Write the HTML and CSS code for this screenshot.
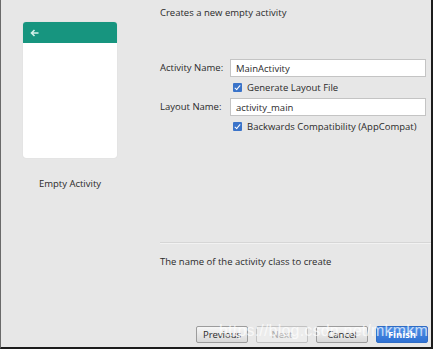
FILE: index.html
```html
<!DOCTYPE html>
<html lang="en">
  <head>
    <meta charset="UTF-8" />
    <title>Empty Activity</title>
    <link rel="stylesheet" href="styles.css">
  </head>
  <body>
    <div class="window">
      <!-- Template preview -->
      <div class="preview">
        <div class="phone">
          <div class="phone-bar">
            <svg width="9" height="8" viewBox="0 0 9 8">
              <path d="M8.5 4H1.5M4.5 1L1.5 4L4.5 7" fill="none" stroke="#d3f1ea" stroke-width="1.6" />
            </svg>
          </div>
        </div>
        <div class="preview-name">Empty Activity</div>
      </div>

      <!-- Options -->
      <div class="details">
        <div class="desc">Creates a new empty activity</div>
        <div class="form">
          <label for="activity-name">Activity Name:</label>
          <input type="text" id="activity-name" value="MainActivity" />
          <span></span>
          <div class="check"><span class="box"></span>Generate Layout File</div>
          <label for="layout-name">Layout Name:</label>
          <input type="text" id="layout-name" value="activity_main" />
          <span></span>
          <div class="check"><span class="box"></span>Backwards Compatibility (AppCompat)</div>
        </div>
        <div class="separator"></div>
        <div class="hint">The name of the activity class to create</div>
        <div class="buttons">
          <button class="btn">Previous</button>
          <button class="btn" disabled>Next</button>
          <button class="btn">Cancel</button>
          <button class="btn primary">Finish</button>
        </div>
      </div>

      <span class="watermark">https://blog.csdn.net/mkmkm</span>
    </div>
  </body>
</html>
```

FILE: styles.css
```css
body {
  margin: 0;
  font-family: "Open Sans", "Noto Sans", sans-serif;
  font-size: 9.5px;
  color: #2a2a2a;
}
.window {
  position: relative;
  display: flex;
  width: 433px;
  height: 349px;
  box-sizing: border-box;
  background-color: #e7e7e7;
  border-left: 1px solid #6a6a6a;
  border-right: 2px solid #1c1c1c;
  border-bottom: 2px solid #1c1c1c;
  overflow: hidden;
}
.preview {
  width: 159px;
  flex-shrink: 0;
  padding: 22px 0 0 22px;
  box-sizing: border-box;
}
.phone {
  width: 94px;
  height: 136px;
  background-color: #fff;
  border-radius: 3px;
  box-shadow: 0 0 1px rgba(0, 0, 0, 0.15);
  overflow: hidden;
}
.phone-bar {
  height: 21px;
  background-color: #17957f;
  display: flex;
  align-items: center;
  padding-left: 7px;
}
.preview-name {
  width: 94px;
  margin-top: 19px;
  text-align: center;
  line-height: 14px;
}
.details {
  flex: 1;
  display: flex;
  flex-direction: column;
  padding-top: 6px;
}
.desc {
  line-height: 14px;
}
.form {
  display: grid;
  grid-template-columns: 70px 196px;
  grid-template-rows: 18px 21px 18px 21px;
  align-items: center;
  margin-top: 39px;
}
.form label {
  line-height: 14px;
}
.form input {
  height: 18px;
  box-sizing: border-box;
  border: 1px solid #c4c4c4;
  background-color: #fff;
  padding: 0 5px;
  font-family: inherit;
  font-size: 9.5px;
  color: #2a2a2a;
  outline: none;
}
.check {
  display: flex;
  align-items: center;
  padding-left: 3px;
  line-height: 14px;
}
.box {
  position: relative;
  width: 9px;
  height: 9px;
  margin-right: 5px;
  border-radius: 1px;
  background-color: #3a73c9;
}
.box::after {
  content: "";
  position: absolute;
  left: 3px;
  top: 1px;
  width: 2px;
  height: 5px;
  border: solid #fff;
  border-width: 0 1.5px 1.5px 0;
  transform: rotate(40deg);
}
.separator {
  margin-top: 105px;
  border-top: 1px solid #d6d6d6;
  border-bottom: 1px solid #f2f2f2;
}
.hint {
  margin-top: 11px;
  line-height: 14px;
}
.buttons {
  margin-top: auto;
  margin-bottom: 4px;
  display: flex;
  justify-content: flex-end;
  gap: 8px;
  padding-right: 3px;
}
.btn {
  width: 52px;
  height: 17px;
  padding: 0;
  border: 1px solid #9c9c9c;
  border-radius: 2px;
  background: linear-gradient(#f6f6f6, #d9d9d9);
  font-family: inherit;
  font-size: 9.5px;
  color: #2a2a2a;
}
.btn:disabled {
  border-color: #c2c2c2;
  background: #ececec;
  color: #a8a8a8;
}
.btn.primary {
  border-color: #2f6cc4;
  background: linear-gradient(#4f8fe6, #2f71d3);
  color: #fff;
  font-weight: bold;
}
.watermark {
  position: absolute;
  left: 218px;
  top: 322px;
  font-family: "Liberation Sans", Arial, sans-serif;
  font-size: 16px;
  letter-spacing: 0.2px;
  color: rgba(255, 255, 255, 0.7);
  pointer-events: none;
}
```
